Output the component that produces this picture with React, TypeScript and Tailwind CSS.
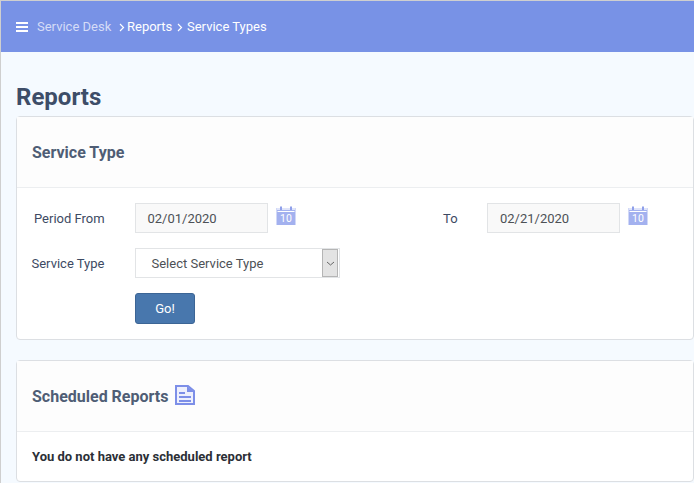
function Cal() {
  return (
    <svg width="20" height="19" viewBox="0 0 20 19" className="shrink-0">
      <rect x="0.5" y="2" width="19" height="17" fill="#a3b1ef" />
      <rect x="1.5" y="5" width="17" height="1" fill="#ffffff" />
      <path d="M1 2h18v2H1z" fill="#dfe4fa" />
      <path d="M4 0.500h2v3.500H4zM14 0.500h2v3.500h-2z" fill="#8fa0ea" />
      <text x="10" y="16" textAnchor="middle" fontSize="10.500" fill="#ffffff" fontFamily="Roboto, sans-serif">10</text>
    </svg>
  );
}

function Chevron() {
  return (
    <svg width="6" height="9" viewBox="0 0 6 9" className="shrink-0">
      <path d="M1 1l3.500 3.500L1 8" fill="none" stroke="#fff" strokeWidth="1.200" />
    </svg>
  );
}

export default function App() {
  return (
    <div className="h-[483px] w-[694px] overflow-hidden border-t border-l border-[#cfcfcf] bg-[#f5faff] font-['Roboto',sans-serif] text-[13px] text-[#3d4a63]">
      <header className="flex h-[51px] items-center bg-[#7892e6] pt-[1px] pl-[15px] text-[13px] whitespace-nowrap text-white">
        <svg width="12" height="10" viewBox="0 0 12 10" className="mr-[9px]">
          <path d="M0 0h12v2H0zM0 4h12v2H0zM0 8h12v2H0z" fill="#fff" />
        </svg>
        <span className="w-[74px] text-[#d5dcf7]">Service Desk</span>
        <span className="ml-[8px]"><Chevron /></span>
        <span className="ml-[2px] w-[46px]">Reports</span>
        <span className="ml-[4px]"><Chevron /></span>
        <span className="ml-[4px]">Service Types</span>
      </header>
      <main className="pl-[15px]">
        <h1 className="mt-[29px] text-[24px] leading-[32px] font-bold text-[#3d4d68]">Reports</h1>
        <section className="mt-[3px] h-[224px] w-[678px] rounded-sm border border-[#dcdfe3] bg-white">
          <div className="flex h-[71px] items-center border-b border-[#eceef0] bg-[#fdfdfd] pt-[2px] pl-[15px]">
            <h2 className="text-base font-bold text-[#4f5d75]">Service Type</h2>
          </div>
          <div className="pt-[15px]">
            <div className="flex h-[30px] items-center">
              <span className="ml-[17px] w-[101px] pt-[2px]">Period From</span>
              <div className="flex h-[30px] w-[133px] items-center border border-[#e2e4e6] bg-[#f9f9f9] pt-[1px] pl-[11.500px] text-[#4d5156]">02/01/2020</div>
              <div className="mb-[5px] ml-[8px]"><Cal /></div>
              <span className="ml-[147px] w-[44px] pt-[2px]">To</span>
              <div className="flex h-[30px] w-[133px] items-center border border-[#e2e4e6] bg-[#f9f9f9] pt-[1px] pl-3 text-[#4d5156]">02/21/2020</div>
              <div className="mb-[5px] ml-[8px]"><Cal /></div>
            </div>
            <div className="mt-[15px] flex h-[30px] items-center">
              <span className="ml-[14.500px] w-[103.500px] pt-[2px]">Service Type</span>
              <div className="flex h-[30px] w-[205px] items-center justify-between border border-[#e2e4e6] bg-white pl-4">
                <span className="-ml-[0.500px] pt-[2px] text-[#4d5156]">Select Service Type</span>
                <span className="mr-px flex h-[28px] w-[16px] items-center justify-center border border-[#b5b5b5] bg-[#e3e3e3]">
                  <svg width="9" height="5" viewBox="0 0 9 5"><path d="M1 1l3.500 3 3.500-3" fill="none" stroke="#666" /></svg>
                </span>
              </div>
            </div>
            <button className="mt-[15px] ml-[118px] block h-[31px] w-[60px] rounded-[3px] border border-[#3c6595] bg-[#4877ad] text-center text-white">Go!</button>
          </div>
        </section>
        <section className="mt-5 h-[122px] w-[678px] rounded-sm border border-[#dcdfe3] bg-white">
          <div className="flex h-[71px] items-center gap-[7px] border-b border-[#eceef0] bg-[#fdfdfd] pt-[2px] pl-[15px]">
            <h2 className="text-base font-bold text-[#4f5d75]">Scheduled Reports</h2>
            <svg width="20" height="20" viewBox="0 0 20 20" className="mb-[5px]">
              <path d="M1 1h12l6 5v13H1z" fill="#eef0fd" stroke="#7d8fe8" strokeWidth="2" />
              <path d="M12 1v6h7z" fill="#7d8fe8" />
              <path d="M4 7h6v2H4zM4 11h12v2H4zM4 15h12v2H4z" fill="#7d8fe8" />
            </svg>
          </div>
          <p className="pt-[15px] pl-[15px] font-bold text-[#2b2f36]">You do not have any scheduled report</p>
        </section>
      </main>
    </div>
  );
}
